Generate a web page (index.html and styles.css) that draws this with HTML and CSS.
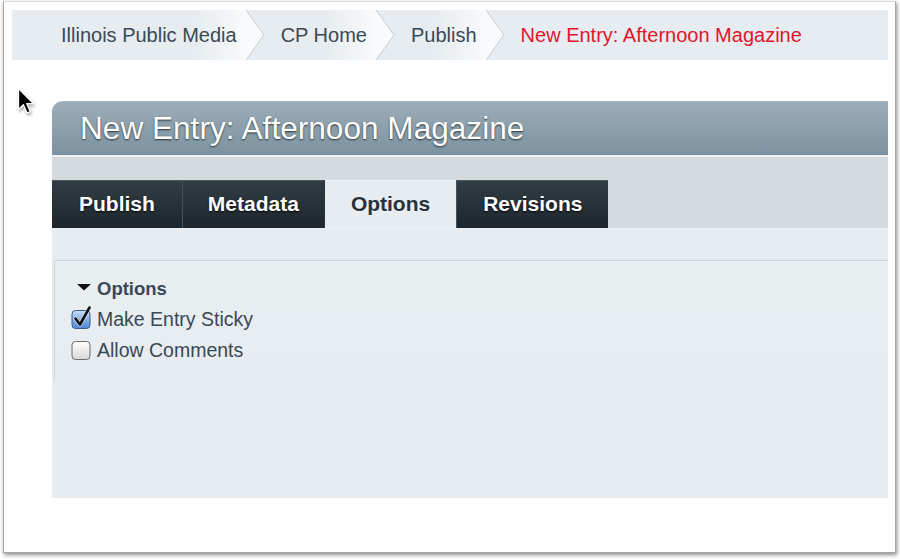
FILE: index.html
```html
<!DOCTYPE html>
<html lang="en">
<head>
<meta charset="utf-8">
<title>New Entry: Afternoon Magazine</title>
<link rel="stylesheet" href="styles.css">
</head>
<body>
<div class="window">
  <nav class="crumbs">
    <span class="crumb first">Illinois Public Media</span><svg class="sep" width="21" height="50" viewBox="0 0 21 50"><polygon points="0,0 2,0 20,25 2,50 0,50" fill="#f8fafb"/><polyline points="2,0 20,25 2,50" fill="none" stroke="#c4cdd3" stroke-width="1"/></svg>
    <span class="crumb">CP Home</span><svg class="sep" width="21" height="50" viewBox="0 0 21 50"><polygon points="0,0 2,0 20,25 2,50 0,50" fill="#f8fafb"/><polyline points="2,0 20,25 2,50" fill="none" stroke="#c4cdd3" stroke-width="1"/></svg>
    <span class="crumb">Publish</span><svg class="sep" width="21" height="50" viewBox="0 0 21 50"><polygon points="0,0 2,0 20,25 2,50 0,50" fill="#f8fafb"/><polyline points="2,0 20,25 2,50" fill="none" stroke="#c4cdd3" stroke-width="1"/></svg>
    <span class="crumb current">New Entry: Afternoon Magazine</span>
  </nav>

  <div class="panel">
    <div class="panel-head"><h1 class="title">New Entry: Afternoon Magazine</h1></div>
    <div class="tabbar">
      <div class="tab first">Publish</div>
      <div class="tab meta">Metadata</div>
      <div class="tab active">Options</div>
      <div class="tab">Revisions</div>
    </div>
    <div class="content">
      <div class="fieldset">
        <div class="legend"><svg class="tri" width="14" height="7" viewBox="0 0 14 7"><polygon points="0,0 14,0 7,6.5" fill="#111"/></svg><span>Options</span></div>
        <label class="row"><svg class="cb" width="21" height="23" viewBox="0 0 21 23"><defs><linearGradient id="cbon" x1="0" y1="0" x2="0" y2="1"><stop offset="0" stop-color="#cfe0f6"/><stop offset="0.5" stop-color="#86afe6"/><stop offset="1" stop-color="#4f88d6"/></linearGradient></defs><rect x="1" y="4.5" width="18" height="18" rx="3.5" fill="url(#cbon)" stroke="#3a5a8e" stroke-width="1"/><path d="M4.5 12.5 L9 18.5 L18.5 1.5" fill="none" stroke="#fff" stroke-width="4.2" stroke-linecap="round" stroke-linejoin="round" opacity="0.55"/><path d="M4.5 12.5 L9 18.5 L18.5 1.5" fill="none" stroke="#111" stroke-width="2.6" stroke-linecap="round" stroke-linejoin="round"/></svg><span>Make Entry Sticky</span></label>
        <label class="row"><svg class="cb" width="21" height="23" viewBox="0 0 21 23"><defs><linearGradient id="cboff" x1="0" y1="0" x2="0" y2="1"><stop offset="0" stop-color="#ffffff"/><stop offset="1" stop-color="#d8d8d8"/></linearGradient></defs><rect x="1" y="4.5" width="18" height="18" rx="3.5" fill="url(#cboff)" stroke="#6c6c6c" stroke-width="1"/></svg><span>Allow Comments</span></label>
      </div>
    </div>
  </div>

  <svg class="cursor" width="20" height="30" viewBox="0 0 20 30"><path d="M1.5 1.5 V22.5 L6.4 17.8 L10 26 L13.2 24.6 L9.7 16.6 H16.4 Z" fill="#000" stroke="#fff" stroke-width="1.3" stroke-linejoin="round"/></svg>
</div>
</body>
</html>
```

FILE: styles.css
```css
html, body {
  margin: 0;
  padding: 0;
  background: #ffffff;
}

body {
  font-family: "Liberation Sans", Arial, Helvetica, sans-serif;
  width: 900px;
  height: 559px;
  overflow: hidden;
}

.window {
  position: relative;
  box-sizing: border-box;
  width: 893px;
  height: 552px;
  margin: 1px 0 0 3px;
  padding: 8px 7px 0 8px;
  background: #ffffff;
  border: 1px solid #a8a8a8;
  border-top-color: #dcdcdc;
  box-shadow: 1px 2px 4px rgba(0, 0, 0, 0.45);
}

/* Breadcrumbs */
.crumbs {
  display: flex;
  align-items: stretch;
  height: 50px;
  background: #e6ecf0;
}

.crumb {
  display: flex;
  align-items: center;
  padding: 0 7px 0 16px;
  font-size: 20px;
  color: #3c4957;
  background: linear-gradient(to right, rgba(248, 250, 251, 0) calc(100% - 50px), rgba(248, 250, 251, 1) 100%);
}

.crumb.first {
  padding-left: 49px;
}

.crumb.current {
  color: #e2142c;
  background: none;
  padding-left: 16px;
}

.sep {
  display: block;
  flex: none;
}

/* Panel */
.panel {
  margin: 41px 0 0 40px;
}

.panel-head {
  height: 53px;
  display: flex;
  align-items: center;
  padding-left: 28px;
  border-top-left-radius: 11px;
  background: linear-gradient(#9badb8, #7c92a0);
  border-top: 1px solid #a9b7c0;
  border-bottom: 2px solid #eef2f5;
}

.title {
  margin: 0;
  font-size: 31.6px;
  font-weight: normal;
  color: #ffffff;
  text-shadow: 0 1px 2px rgba(0, 0, 0, 0.7);
}

.tabbar {
  display: flex;
  align-items: flex-end;
  height: 71px;
  box-sizing: border-box;
  padding-top: 23px;
  background: #d4dbdf;
}

.tab {
  height: 48px;
  box-sizing: border-box;
  display: flex;
  align-items: center;
  padding: 0 26px;
  font-size: 21px;
  font-weight: bold;
  color: #ffffff;
  text-shadow: 0 1px 2px rgba(0, 0, 0, 0.9);
  background: linear-gradient(#313d45, #1d262c);
  box-shadow: inset 0 1px 0 #4a5862;
  border-left: 1px solid #45525b;
}

.tab.first {
  border-left: none;
  padding: 0 27px;
}

.tab.meta {
  padding: 0 25px;
}

.tab.active {
  color: #26323b;
  text-shadow: 0 1px 0 rgba(255, 255, 255, 0.6);
  background: #e6ecf0;
  box-shadow: inset 0 1px 0 #f1f4f6;
  border-left: 1px solid #2a343b;
}

.content {
  height: 270px;
  box-sizing: border-box;
  padding-top: 31px;
  background: #e6ecf0;
  border-top: 1px solid #eef2f4;
}

.fieldset {
  margin-left: 2px;
  height: 120px;
  box-sizing: border-box;
  padding: 12px 0 0 16px;
  border-top: 1px solid #ccd5db;
  border-left: 1px solid #ccd5db;
  background: linear-gradient(#e9eef1, #e6ecf0);
}

.legend {
  display: flex;
  align-items: center;
  height: 31px;
  font-size: 18.5px;
  font-weight: bold;
  color: #3a4755;
}

.tri {
  display: block;
  margin: 0 6px 2px 6px;
}

.row {
  display: flex;
  align-items: center;
  height: 31px;
  font-size: 19.5px;
  color: #3a4755;
}

.cb {
  display: block;
  margin: -4px 5px 0 0;
}

.cursor {
  position: absolute;
  left: 13px;
  top: 85px;
  filter: drop-shadow(1px 2px 1.5px rgba(0, 0, 0, 0.35));
}
```
